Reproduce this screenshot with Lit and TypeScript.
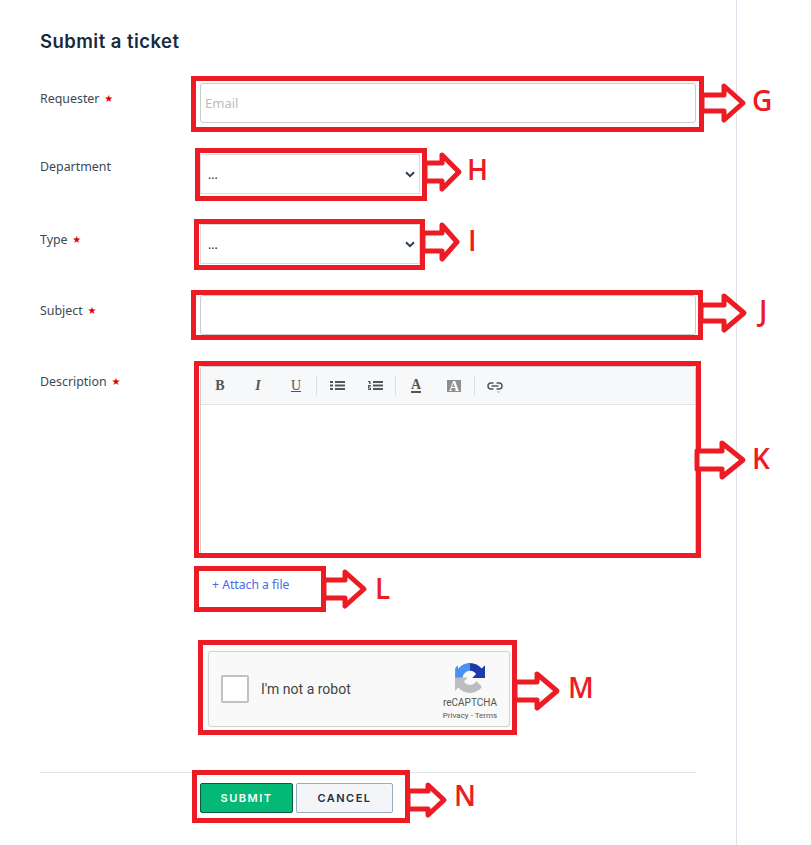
import { LitElement, html, css, svg } from "lit";
import { customElement } from "lit/decorators.js";

type Box = { x: number; y: number; w: number; h: number };
type Note = {
  letter: string; box: Box; start: number; head: number; tip: number; cy: number;
  shaft: number; flare: number; lx: number; ly: number;
};

const NOTES: Note[] = [
  { letter: "G", box: { x: 193.5, y: 78.5, w: 508, h: 51 }, start: 702, head: 724, tip: 743, cy: 103, shaft: 8, flare: 17, lx: 752, ly: 111 },
  { letter: "H", box: { x: 197.5, y: 150.5, w: 227, h: 48 }, start: 425, head: 442, tip: 459, cy: 172, shaft: 9, flare: 17, lx: 467, ly: 180 },
  { letter: "I", box: { x: 196.5, y: 221.5, w: 226, h: 46 }, start: 423, head: 442, tip: 457, cy: 242, shaft: 9, flare: 17, lx: 468, ly: 251 },
  { letter: "J", box: { x: 193.5, y: 292.5, w: 507, h: 45 }, start: 701, head: 724, tip: 744, cy: 313, shaft: 8, flare: 17, lx: 759, ly: 321 },
  { letter: "K", box: { x: 196.5, y: 363.5, w: 502, h: 192 }, start: 697, head: 722, tip: 743, cy: 460, shaft: 9, flare: 17, lx: 752, ly: 469 },
  { letter: "L", box: { x: 196.5, y: 568.5, w: 127, h: 41 }, start: 324, head: 345, tip: 364, cy: 589, shaft: 9, flare: 17, lx: 375, ly: 599 },
  { letter: "M", box: { x: 200.5, y: 642.5, w: 314, h: 90 }, start: 515, head: 537, tip: 557, cy: 691, shaft: 9, flare: 17, lx: 568, ly: 698 },
  { letter: "N", box: { x: 194.5, y: 772.5, w: 213, h: 48 }, start: 408, head: 428, tip: 444, cy: 800, shaft: 9, flare: 15, lx: 454, ly: 806 },
];

const chevron = html`<svg class="chev" width="10" height="7" viewBox="0 0 10 7"><path d="M1 1.2 5 5.2 9 1.2" fill="none" stroke="#2c3e50" stroke-width="2"/></svg>`;

@customElement("app-root")
export class AppRoot extends LitElement {
  static styles = css`
    :host { display: block; position: relative; height: 845px; overflow: hidden; background: #fff; font-family: "Noto Sans", sans-serif; color: #36414f; }
    .page { width: 737px; height: 845px; box-sizing: border-box; border-right: 1px solid #dde3ea; padding: 29px 40px 0; }
    .inner { width: 656px; }
    h1 { margin: 0 0 29px; font: 600 18.5px/25px Inter, sans-serif; color: #182a3e; letter-spacing: 0.45px; }
    .row { display: grid; grid-template-columns: 160px 1fr; }
    .gap31 { margin-bottom: 31px; }
    .gap30 { margin-bottom: 30px; }
    label { font-size: 12.4px; line-height: 18px; padding-top: 7px; color: #3d4856; }
    label.dept { padding-top: 4px; }
    label.type { padding-top: 7px; }
    .star { color: #e00000; font: 10px/18px "DejaVu Sans", sans-serif; vertical-align: 1px; margin-left: 1.5px; }
    input { display: block; width: 100%; height: 40px; box-sizing: border-box; border: 1px solid #ccc; border-radius: 3px; padding: 0 4px; font: 13px "Noto Sans", sans-serif; outline: none; background: #fff; }
    input::placeholder { color: #b9bcc2; }
    .sel { position: relative; width: 220px; height: 40px; }
    select { display: block; appearance: none; width: 100%; height: 100%; box-sizing: border-box; border: 1px solid #d8dae0; background: #fff; padding: 0 7px; font: 12px "Noto Sans", sans-serif; color: #1c2b4a; border-radius: 0; outline: none; }
    .chev { position: absolute; right: 5px; top: 17px; pointer-events: none; }
    .editor { height: 187px; box-sizing: border-box; border: 1px solid #ccc; border-bottom: 0; border-radius: 3px 3px 0 0; }
    .toolbar { display: flex; align-items: center; height: 38px; box-sizing: border-box; background: #f7f8fa; border-bottom: 1px solid #dfe3e8; }
    .tb { width: 38px; height: 37px; display: flex; align-items: center; justify-content: center; color: #555; font: 14px/1 "Liberation Serif", serif; }
    .tb.b { font-weight: 700; }
    .tb.i { font-style: italic; font-weight: 700; }
    .tb.u { text-decoration: underline; }
    .tb.a span { border-bottom: 2px solid #555; font-weight: 700; line-height: 12px; }
    .tb.bg span { background: #8e8e8e; color: #fff; font-weight: 700; width: 14px; height: 12px; line-height: 13px; text-align: center; display: block; }
    .sep { width: 1px; height: 20px; background: #dcdfe3; margin: 0 1px; }
    .body { height: 148px; }
    .attach { margin: 23px 0 0 12px; height: 18px; font-size: 12.2px; line-height: 18px; color: #4a6be0; text-decoration: none; display: block; }
    .captcha { margin: 57px 0 0 8px; width: 302px; height: 76px; box-sizing: border-box; border: 1px solid #d3d3d3; border-radius: 3px; background: #f9f9f9; display: flex; align-items: center; padding-left: 12px; font-family: Roboto, sans-serif; box-shadow: 0 0 3px rgba(0,0,0,.06); }
    .check { width: 28px; height: 28px; box-sizing: border-box; border: 2px solid #c1c1c1; border-radius: 2px; background: #fff; margin-right: 12px; }
    .robot { flex: 1; font-size: 14px; color: #444; }
    .brand { width: 78px; padding-top: 7px; display: flex; flex-direction: column; align-items: center; color: #555; }
    .brand svg { display: block; margin-bottom: 3px; }
    .rc { font-size: 10px; line-height: 14px; }
    .terms { font-size: 8px; line-height: 12px; }
    hr { border: 0; border-top: 1px solid #e3e5e8; margin: 45px 0 10px; }
    .actions { display: flex; gap: 3px; margin-left: 160px; }
    button { height: 30px; box-sizing: border-box; border-radius: 2px; font: 600 11px Inter, sans-serif; letter-spacing: 1.5px; padding: 0; }
    .submit { width: 93px; background: #03b975; color: #fff; border: 1px solid #0c5a44; }
    .cancel { width: 97px; background: #f3f5f8; color: #1f2d3d; border: 1px solid #9aabbf; }
    .notes { position: absolute; left: 0; top: 0; pointer-events: none; }
    .notes text { font: 600 28px "Open Sans", sans-serif; fill: #ed1c24; }
  `;

  private arrow(n: Note) {
    const p = [
      [n.start, n.cy - n.shaft], [n.head, n.cy - n.shaft], [n.head, n.cy - n.flare],
      [n.tip, n.cy], [n.head, n.cy + n.flare], [n.head, n.cy + n.shaft], [n.start, n.cy + n.shaft],
    ].map((q) => q.join(",")).join(" ");
    return svg`<polygon points=${p} fill="#fff" stroke="#ed1c24" stroke-width="5" stroke-linejoin="round"/>`;
  }

  render() {
    return html`
      <div class="page"><div class="inner">
        <h1>Submit a ticket</h1>
        <div class="row gap31">
          <label>Requester <span class="star">★</span></label>
          <input placeholder="Email" />
        </div>
        <div class="row gap30">
          <label class="dept">Department</label>
          <div class="sel"><select><option>...</option></select>${chevron}</div>
        </div>
        <div class="row gap31">
          <label class="type">Type <span class="star">★</span></label>
          <div class="sel"><select><option>...</option></select>${chevron}</div>
        </div>
        <div class="row gap31">
          <label>Subject <span class="star">★</span></label>
          <input />
        </div>
        <div class="row">
          <label>Description <span class="star">★</span></label>
          <div>
            <div class="editor">
              <div class="toolbar">
                <div class="tb b">B</div><div class="tb i">I</div><div class="tb u">U</div>
                <div class="sep"></div>
                <div class="tb"><svg width="15" height="9" viewBox="0 0 15 9"><path d="M0 0h3v2H0zM5 0h10v2H5zM0 3.5h3v2H0zM5 3.5h10v2H5zM0 7h3v2H0zM5 7h10v2H5z" fill="#555"/></svg></div>
                <div class="tb"><svg width="15" height="9" viewBox="0 0 15 9"><path d="M5 0h10v2H5zM5 3.5h10v2H5zM5 7h10v2H5zM0 0h2.5v3H1V1H0zM0 4h3v1.2H1.300V6.500H3V9H0V8h2V7.400H0z" fill="#555"/></svg></div>
                <div class="sep"></div>
                <div class="tb a"><span>A</span></div><div class="tb bg"><span>A</span></div>
                <div class="sep"></div>
                <div class="tb"><svg width="16" height="14" viewBox="0 0 16 14"><g fill="none" stroke="#555" stroke-width="1.500"><path d="M6.500 4H4a3 3 0 0 0 0 6h2.500M9.500 4H12a3 3 0 0 1 0 6H9.500M4.500 7h7"/></g><path d="M10 12.500h3l-1.500 1.500z" fill="#999"/></svg></div>
              </div>
              <div class="body"></div>
            </div>
            <a class="attach" href="#">+ Attach a file</a>
            <div class="captcha">
              <div class="check"></div>
              <div class="robot">I'm not a robot</div>
              <div class="brand">
                <svg width="30" height="30" viewBox="0 0 64 64">
                  <path d="M64 31.955l-.033-1.37V4.687l-7.16 7.160C50.948 4.674 42.033.093 32.050.093v16.260c.485 0 .86.057 1.135.163 4.976.393 9.288 3.140 11.828 7.124l-8.307 8.307c10.522-.04 22.400-.066 27.295.005" fill="#1c3aa9"/>
                  <path d="M32.050.093C21.650.093 12.430 5.053 6.592 12.733l-.5-7.700L.5 10.500.1 32h16.100c.2-4.500 2-8.800 7.100-12.700 2.050-1.600 4.952-2.906 8.750-2.947z" fill="#4a90f5"/>
                  <path d="M.001 31.953l.033 1.370v25.898l7.160-7.160c5.860 7.173 14.774 11.754 24.760 11.754 10.394 0 19.620-4.960 25.456-12.640L45.674 38.300a15.550 15.550 0 0 1-4.754 5.334c-2.050 1.600-4.952 2.906-8.968 2.906-.485 0-.86-.057-1.135-.163-4.976-.393-9.288-3.140-11.828-7.124l8.307-8.307c-10.522.04-22.400.066-27.295-.005" fill="#bdbdbd"/>
                </svg>
                <div class="rc">reCAPTCHA</div>
                <div class="terms">Privacy - Terms</div>
              </div>
            </div>
          </div>
        </div>
        <hr />
        <div class="actions">
          <button class="submit">SUBMIT</button>
          <button class="cancel">CANCEL</button>
        </div>
      </div></div>
      <svg class="notes" width="811" height="845" viewBox="0 0 811 845">
        ${NOTES.map((n) => svg`
          <rect x=${n.box.x} y=${n.box.y} width=${n.box.w} height=${n.box.h} fill="none" stroke="#ed1c24" stroke-width="5"/>
          ${this.arrow(n)}
          <text x=${n.lx} y=${n.ly}>${n.letter}</text>
        `)}
      </svg>
    `;
  }
}
